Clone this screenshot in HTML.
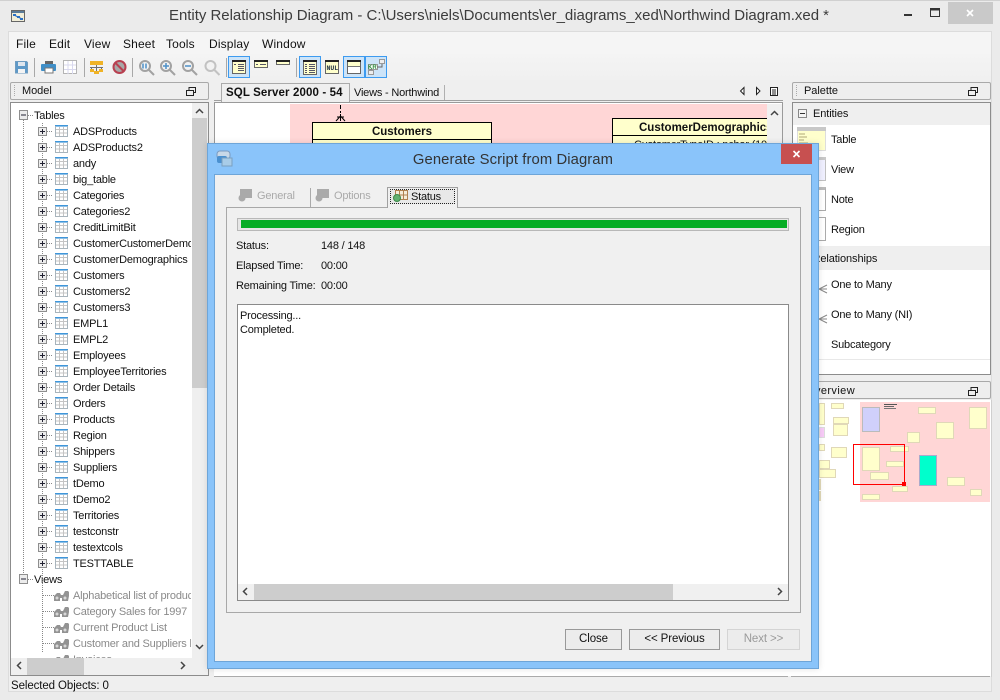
<!DOCTYPE html>
<html><head><meta charset="utf-8"><title>Entity Relationship Diagram</title>
<style>
html,body{margin:0;padding:0}
body{width:1000px;height:700px;position:relative;overflow:hidden;background:#ebebeb;font-family:"Liberation Sans",sans-serif;font-size:11px;letter-spacing:-.2px;color:#111}
div{box-sizing:border-box}
.a,.t{position:absolute}
.t{white-space:nowrap;line-height:16px;margin-top:1px}
.r{height:16px;line-height:16px;white-space:nowrap;padding-left:73px}
.v{color:#8a8a8a}
.h{position:absolute;height:18px;border:1px solid #a9a9a9;border-radius:2px;background:#eee}
.m{font-size:12px;letter-spacing:.15px;top:36px;margin-top:0}
.p{font-size:11px;letter-spacing:-.05px;margin-top:0}
.b{position:absolute;top:629px;height:21px;border:1px solid #999;background:#ececec;text-align:center;line-height:19px;font-size:11.5px;letter-spacing:-.1px}
svg{position:absolute;left:0;top:0}
.ti{color:#3c3c3c;letter-spacing:0}
</style></head><body>
<div class="a" style="left:0;top:0;width:1000px;height:1px;background:#d0d0d0"></div>
<div class="a" style="left:8px;top:31px;width:984px;height:661px;background:#efefef;border:1px solid #dcdcdc"></div>
<div class="a" style="left:9px;top:32px;width:982px;height:22px;background:#f5f5f5"></div>
<div class="a" style="left:9px;top:54px;width:982px;height:26px;background:linear-gradient(#f4f4f4,#f0f0f0)"></div>

<div class="t ti" style="left:169px;top:7px;margin-top:0;line-height:18px;font-size:15px;letter-spacing:-.03px">Entity Relationship Diagram - C:\Users\niels\Documents\er_diagrams_xed\Northwind Diagram.xed *</div>
<div class="a" style="left:948px;top:2px;width:45px;height:22px;background:#c9c9c9"></div>

<div class="t m" style="left:16px">File</div>
<div class="t m" style="left:49px">Edit</div>
<div class="t m" style="left:84px">View</div>
<div class="t m" style="left:123px">Sheet</div>
<div class="t m" style="left:166px">Tools</div>
<div class="t m" style="left:209px">Display</div>
<div class="t m" style="left:262px">Window</div>

<!-- toggled toolbar buttons -->
<div class="a" style="left:228px;top:56px;width:22px;height:22px;background:#cde4f8;border:1px solid #3d9bf0"></div>
<div class="a" style="left:299px;top:56px;width:22px;height:22px;background:#cde4f8;border:1px solid #3d9bf0"></div>
<div class="a" style="left:343px;top:56px;width:22px;height:22px;background:#cde4f8;border:1px solid #3d9bf0"></div>
<div class="a" style="left:365px;top:56px;width:22px;height:22px;background:#cde4f8;border:1px solid #3d9bf0"></div>

<!-- Model panel -->
<div class="h" style="left:10px;top:82px;width:199px"></div>
<div class="t p" style="left:22px;top:83px">Model</div>
<div class="a" style="left:10px;top:102px;width:199px;height:574px;background:#efefef;border:1px solid #8c8c8c"></div>
<div class="a" style="left:11px;top:103px;width:181px;height:555px;background:#fff"></div>
<div class="a" style="left:192px;top:118px;width:15px;height:270px;background:#cdcdcd"></div>
<div class="a" style="left:27px;top:658px;width:57px;height:17px;background:#cdcdcd"></div>
<div class="a" style="left:11px;top:108px;width:180px;height:550px;overflow:hidden">
<div style="position:absolute;left:-11px;top:0;width:200px">
<div class="r" style="padding-left:34px">Tables</div>
<div class="r">ADSProducts</div><div class="r">ADSProducts2</div><div class="r">andy</div><div class="r">big_table</div><div class="r">Categories</div><div class="r">Categories2</div><div class="r">CreditLimitBit</div><div class="r">CustomerCustomerDemo</div><div class="r">CustomerDemographics</div><div class="r">Customers</div><div class="r">Customers2</div><div class="r">Customers3</div><div class="r">EMPL1</div><div class="r">EMPL2</div><div class="r">Employees</div><div class="r">EmployeeTerritories</div><div class="r">Order Details</div><div class="r">Orders</div><div class="r">Products</div><div class="r">Region</div><div class="r">Shippers</div><div class="r">Suppliers</div><div class="r">tDemo</div><div class="r">tDemo2</div><div class="r">Territories</div><div class="r">testconstr</div><div class="r">testextcols</div><div class="r">TESTTABLE</div>
<div class="r" style="padding-left:34px">Views</div>
<div class="r v">Alphabetical list of products</div><div class="r v">Category Sales for 1997</div><div class="r v">Current Product List</div><div class="r v">Customer and Suppliers by City</div><div class="r v">Invoices</div>
</div></div>

<!-- Tabs and diagram -->
<div class="a" style="left:214px;top:100px;width:569px;height:1px;background:#a0a0a0"></div>
<div class="a" style="left:221px;top:83px;width:129px;height:19px;background:#efefef;border:1px solid #aaa;border-bottom:0"></div>
<div class="t" style="left:226px;top:84px;font-weight:bold;font-size:11.5px;letter-spacing:.12px">SQL Server 2000 - 54</div>
<div class="t" style="left:354px;top:84px">Views - Northwind</div>
<div class="a" style="left:444px;top:85px;width:1px;height:15px;background:#b0b0b0"></div>
<div class="a" style="left:214px;top:102px;width:569px;height:574px;background:#fff;border:1px solid #9a9a9a;border-bottom:0"></div>
<div class="a" style="left:290px;top:104px;width:477px;height:558px;background:#ffd6d6"></div>
<div class="a" style="left:767px;top:104px;width:15px;height:558px;background:#f0f0f0"></div>
<div class="a" style="left:312px;top:122px;width:180px;height:30px;background:#ffffcc;border:1px solid #000"></div>
<div class="a" style="left:313px;top:139px;width:178px;height:1px;background:#000"></div>
<div class="t" style="left:312px;top:123px;width:180px;text-align:center;font-weight:bold;font-size:11.5px;letter-spacing:0">Customers</div>
<div class="a" style="left:612px;top:118px;width:155px;height:34px;background:#ffffcc;border:1px solid #000;border-right:0"></div>
<div class="a" style="left:613px;top:135px;width:154px;height:1px;background:#000"></div>
<div class="a" style="left:613px;top:119px;width:154px;height:16px;overflow:hidden"><div class="t" style="left:26px;top:0;font-weight:bold;font-size:11.5px;letter-spacing:0">CustomerDemographics</div></div>
<div class="a" style="left:634px;top:136px;width:133px;height:7px;overflow:hidden"><div class="t" style="left:0;top:0">CustomerTypeID : nchar (10)</div></div>

<!-- Palette -->
<div class="h" style="left:792px;top:82px;width:199px"></div>
<div class="t p" style="left:804px;top:83px">Palette</div>
<div class="a" style="left:792px;top:102px;width:199px;height:273px;background:#fff;border:1px solid #8c8c8c"></div>
<div class="a" style="left:793px;top:103px;width:197px;height:22px;background:#efefef"></div>
<div class="t" style="left:813px;top:105px;letter-spacing:-.1px">Entities</div>
<div class="a" style="left:793px;top:244px;width:197px;height:3px;background:#fff;border-bottom:1px solid #eee"></div>
<div class="a" style="left:793px;top:247px;width:197px;height:23px;background:#efefef"></div>
<div class="t" style="left:812.5px;top:250px;letter-spacing:-.1px">Relationships</div>
<div class="a" style="left:793px;top:359px;width:197px;height:1px;background:#e8e8e8"></div>
<div class="a" style="left:797px;top:127px;width:29px;height:24px;background:#ffffcc;border:1px solid #ddd"></div>
<div class="a" style="left:797px;top:127px;width:29px;height:4px;background:#c8c8c8"></div>
<div class="a" style="left:797px;top:157px;width:29px;height:24px;background:#f0f0ff;border:1px solid #c0c0c0"></div>
<div class="a" style="left:797px;top:157px;width:29px;height:3px;background:#c8c8c8"></div>
<div class="a" style="left:797px;top:187px;width:29px;height:24px;background:#fff;border:1px solid #aaa;border-top:3px solid #bbb"></div>
<div class="a" style="left:797px;top:217px;width:29px;height:24px;background:#fff;border:1px solid #aaa"></div>
<div class="t" style="left:831px;top:131px">Table</div>
<div class="t" style="left:831px;top:161px">View</div>
<div class="t" style="left:831px;top:191px">Note</div>
<div class="t" style="left:831px;top:221px">Region</div>
<div class="t" style="left:831px;top:276px">One to Many</div>
<div class="t" style="left:831px;top:306px">One to Many (NI)</div>
<div class="t" style="left:831px;top:336px">Subcategory</div>

<!-- Overview -->
<div class="h" style="left:792px;top:381px;width:199px"></div>
<div class="t p" style="left:806px;top:383px;letter-spacing:.4px">Overview</div>
<div class="a" style="left:792px;top:400px;width:199px;height:276px;background:#fff"></div>
<div class="a" style="left:991px;top:400px;width:1px;height:277px;background:#cfcfcf"></div>
<div class="a" style="left:214px;top:669px;width:777px;height:7px;background:#fff"></div>
<div class="a" style="left:214px;top:676px;width:574px;height:1px;background:#aaa"></div>
<div class="a" style="left:791px;top:676px;width:199px;height:1px;background:#aaa"></div>
<div class="a" style="left:860px;top:402px;width:130px;height:100px;background:#ffd6d6"></div>
<svg width="1000" height="700" style="z-index:1">
<g fill="#ffffcc" stroke="#e0d8b8">
<rect x="819.5" y="403.5" width="5" height="21"/><rect x="831.5" y="403.5" width="12" height="5"/><rect x="833.5" y="417.5" width="15" height="6"/><rect x="833.5" y="424.5" width="14" height="11"/><rect x="819.5" y="444.5" width="5" height="6"/><rect x="831.5" y="447.5" width="15" height="10"/><rect x="819.5" y="460.5" width="10" height="8"/><rect x="819.5" y="469.5" width="16" height="8"/><rect x="819.5" y="479.5" width="1" height="10"/><rect x="819.5" y="491.5" width="1" height="9"/>
<rect x="918.5" y="407.5" width="17" height="6"/><rect x="969.5" y="407.5" width="17" height="21"/><rect x="936.5" y="422.5" width="17" height="16"/><rect x="907.5" y="432.5" width="12" height="10"/><rect x="862.5" y="447.5" width="17" height="23"/><rect x="890.5" y="446.5" width="18" height="5"/><rect x="886.5" y="461.5" width="17" height="5"/><rect x="870.5" y="472.5" width="18" height="7"/><rect x="947.5" y="477.5" width="17" height="8"/><rect x="892.5" y="486.5" width="15" height="5"/><rect x="970.5" y="489.5" width="11" height="6"/><rect x="862.5" y="494.5" width="17" height="5"/>
</g>
<rect x="819.5" y="427.5" width="5" height="10" fill="#f8ccf8" stroke="#ddd"/>
<rect x="862.5" y="407.5" width="17" height="24" fill="#d0d0fb" stroke="#bbb"/>
<rect x="919.5" y="455.5" width="17" height="30" fill="#00ffcc" stroke="#aac"/>
<rect x="884" y="404" width="13" height="1" fill="#555"/><rect x="884" y="406" width="10" height="1" fill="#666"/><rect x="884" y="408" width="12" height="1" fill="#777"/>
<rect x="853.5" y="444.5" width="51" height="40" fill="none" stroke="#f00"/><rect x="902" y="482" width="4" height="4" fill="#f00"/>
</svg>

<!-- Static icons -->
<svg width="1000" height="700" style="z-index:1">
<defs>
<pattern id="tp" patternUnits="userSpaceOnUse" x="30" y="123" width="44" height="16">
<path d="M12.5 0v16" stroke="#888" stroke-dasharray="1 1"/>
<rect x="8.5" y="4.5" width="8" height="8" fill="#ececec" stroke="#8e8e8e"/><path d="M10 8.5h5M12.5 6v5" stroke="#223" fill="none"/>
<path d="M17 8.5h6" stroke="#888" stroke-dasharray="1 1"/>
<rect x="25.5" y="2.5" width="12" height="11" fill="#fff" stroke="#a8b4bc"/><path d="M25 2.500h13" stroke="#3f96da" stroke-width="1" fill="none"/><path d="M26 3.500h11" stroke="#8cc0e8" fill="none"/><path d="M29.500 4v9M33.500 4v9M26 6.500h11M26 10h11" stroke="#c4c4c4" fill="none"/>
</pattern>
<pattern id="vp" patternUnits="userSpaceOnUse" x="30" y="587" width="44" height="16">
<path d="M13 8.500h11" stroke="#888" stroke-dasharray="1 1"/>
<path d="M24 14v-5l3-3h3l1 2h2l2-4h3l1 1v4l-1 5h-6v-3h-2v3z" fill="#939393"/>
<circle cx="27" cy="11" r="1.500" fill="#d8d8d8"/><circle cx="35" cy="11" r="1.500" fill="#d8d8d8"/>
</pattern>
</defs>
<!-- app icon -->
<rect x="11.500" y="10.500" width="13" height="11" fill="#f2eed8" stroke="#666"/><rect x="12" y="11" width="12" height="2" fill="#5a7a98"/><path d="M14 15l4 2 4 2" stroke="#2a6fc4" fill="none"/><rect x="13" y="14" width="3" height="2" fill="#2a6fc4"/><rect x="17" y="16" width="3" height="2" fill="#2a6fc4"/><rect x="20" y="18" width="3" height="2" fill="#2a6fc4"/>
<!-- tree -->
<path d="M23.500 120V574M42.500 571V652" stroke="#888" stroke-dasharray="1 1" fill="none"/>
<rect x="30" y="123" width="44" height="448" fill="url(#tp)"/>
<rect x="30" y="587" width="44" height="71" fill="url(#vp)"/>
<rect x="19.500" y="110.500" width="8" height="9" fill="#ececec" stroke="#8e8e8e"/><path d="M21 115h5" stroke="#223"/><path d="M28 115.500h5" stroke="#888" stroke-dasharray="1 1"/>
<rect x="19.500" y="574.500" width="8" height="9" fill="#ececec" stroke="#8e8e8e"/><path d="M21 579h5" stroke="#223"/><path d="M28 579.500h5" stroke="#888" stroke-dasharray="1 1"/>
<!-- panel grips and restore icons -->
<path d="M14.500 85V97M796.500 85V97" stroke="#aaa" stroke-dasharray="1 1"/>
<g fill="none" stroke="#222"><rect x="186.500" y="90.500" width="7" height="5" fill="#eee"/><path d="M189 90v-2.500h6.500v5H194"/>
<rect x="968.500" y="90.500" width="7" height="5"/><path d="M971 90v-2.500h6.500v5H976"/>
<rect x="968.500" y="390.500" width="7" height="5"/><path d="M971 390v-2.500h6.500v5H976"/></g>
<!-- window controls -->
<rect x="904" y="14" width="8" height="2" fill="#333"/><rect x="930.500" y="8.500" width="9" height="8" fill="none" stroke="#333"/><path d="M930 9.500h10" stroke="#333" stroke-width="2"/>
<path d="M967 10l6 6M973 10l-6 6" stroke="#fff" stroke-width="1.600"/>
<!-- scroll arrows -->
<g fill="none" stroke="#444" stroke-width="1.500"><path d="M196 113l3.500-3.500 3.500 3.500M196 645l3.500 3.500 3.500-3.500M21 662l-3.500 3.500 3.500 3.500M181 662l3.500 3.500-3.500 3.500M771 115l3.500-3.500 3.500 3.500"/></g>
<!-- tab nav -->
<path d="M744 87.500v7l-3.500-3.500zM756.500 87.500v7l3.500-3.500z" fill="#fff" stroke="#222"/>
<rect x="770.500" y="87.500" width="7" height="8" fill="#fff" stroke="#222"/><path d="M772 90h4M772 92h4M772 94h4" stroke="#222"/>
<!-- diagram -->
<path d="M340.500 105v8" stroke="#000" stroke-dasharray="4 2"/><path d="M336 121l4.500-5 4.500 5M340.500 114v7M337 117h7" fill="none" stroke="#000"/>
<!-- palette -->
<rect x="798.500" y="109.500" width="8" height="8" fill="#f4f4f4" stroke="#888"/><path d="M800 113.500h5" stroke="#333"/>
<path d="M827 285l-8 4 8 4M819 289h8M827 315l-8 4 8 4M819 319h8" fill="none" stroke="#888"/>
<path d="M799 134h6M799 137h8M799 140h5M799 143h9M799 146h7" stroke="#b0a878"/>
<!-- toolbar: save -->
<path d="M15.500 61.500h11l1 1v10.500h-12z" fill="#5e99c8" stroke="#6f9cc0"/><rect x="18" y="62" width="7" height="4" fill="#dfe6ee"/><rect x="18" y="69" width="7" height="4" fill="#f4f4f4"/>
<path d="M34.500 58v19M84.500 58v19M132.500 58v19M226.500 58v19M296.500 58v19" stroke="#a8a8a8"/>
<!-- print -->
<rect x="45" y="61" width="8" height="3" fill="#666"/><rect x="41" y="64" width="15" height="7" rx="1" fill="#3f8fc8"/><rect x="45" y="68" width="8" height="5" fill="#fff" stroke="#777"/>
<!-- grid -->
<rect x="63.500" y="60.500" width="13" height="13" fill="#fff" stroke="#b4b4b4"/><path d="M68 61v13M72.500 61v13M64 65h12M64 69.500h12" stroke="#d8d8ee"/>
<!-- orange tree -->
<rect x="90" y="61" width="13" height="4" fill="#f0b326"/><path d="M90 67.500h13M96.500 65v7M91.500 67v3M101.500 67v3" stroke="#707070" fill="none"/><rect x="90" y="69" width="4" height="3" fill="#f0b326"/><rect x="99" y="69" width="4" height="3" fill="#f0b326"/><rect x="94" y="71" width="5" height="3" fill="#f0b326"/>
<!-- no sign -->
<circle cx="119.500" cy="67" r="6" fill="#a8a8a8" stroke="#b84050" stroke-width="2"/><path d="M115.500 63l8 8" stroke="#b84050" stroke-width="2"/>
<!-- magnifiers -->
<g fill="none" stroke="#a2a2a2" stroke-width="2"><circle cx="145" cy="66" r="5"/><path d="M149 70l5 5"/><circle cx="166" cy="66" r="5"/><path d="M170 70l5 5"/><circle cx="188" cy="66" r="5"/><path d="M192 70l5 5"/><circle cx="210.500" cy="66" r="5" stroke="#c2c2c2"/><path d="M214.500 70l5 5" stroke="#c2c2c2"/></g>
<path d="M143 63.500v5M146 63.500v5" stroke="#4d90c8" stroke-width="1.500"/><path d="M163 66h6M166 63v6M185 66h6" stroke="#4d90c8" stroke-width="1.500"/>
<!-- display icons -->
<g stroke="#666"><rect x="232.500" y="60.500" width="13" height="13" fill="#ffffcc"/><rect x="254.500" y="60.500" width="13" height="7" fill="#ffffcc"/><rect x="276.500" y="60.500" width="13" height="4" fill="#ffffcc"/><rect x="303.500" y="60.500" width="13" height="14" fill="#ffffcc"/><rect x="325.500" y="60.500" width="13" height="13" fill="#ffffcc"/><rect x="347.500" y="60.500" width="13" height="13" fill="#fff"/></g>
<g fill="#222"><rect x="232" y="60" width="14" height="2"/><rect x="254" y="60" width="14" height="2"/><rect x="276" y="60" width="14" height="2"/><rect x="303" y="60" width="14" height="2"/><rect x="325" y="60" width="14" height="2"/><rect x="347" y="60" width="14" height="2"/></g>
<path d="M234 64.500h2M238 64.500h6M238 66.500h6M238 68.500h6M238 70.500h6M256 64.500h2M260 64.500h6M305 64.500h2M309 64.500h6M305 66.500h2M309 66.500h6M305 68.500h2M309 68.500h6M305 70.500h2M309 70.500h6M305 72.500h2M309 72.500h6" stroke="#556"/>
<rect x="348" y="62" width="12" height="4" fill="#ffffcc"/><path d="M348 66.500h12" stroke="#777"/>
<text x="326.500" y="70" font-family="Liberation Mono" font-weight="bold" font-size="6.500" fill="#234" letter-spacing="0">NUL</text>
<rect x="368.500" y="64.500" width="9" height="5" fill="#fff" stroke="#999"/><rect x="379.500" y="59.500" width="5" height="4" fill="#eee" stroke="#999"/><rect x="368.500" y="70.500" width="5" height="4" fill="#eee" stroke="#999"/><path d="M377 67h5v-3M371 70v-1" stroke="#666" fill="none"/>
<text x="368" y="69" font-family="Liberation Sans" font-weight="bold" font-size="6" fill="#2a8a3a" letter-spacing="0">KR</text>
</svg>

<!-- Status bar -->
<div class="t" style="left:11px;top:677px;font-size:11.5px;letter-spacing:-.1px">Selected Objects: 0</div>

<!-- Dialog -->
<div class="a" style="left:207px;top:143px;width:612px;height:526px;background:#8ac4fa;border:1px solid #6ea5d8;box-shadow:0 0 6px rgba(0,0,0,.12);z-index:2"></div>
<div class="a" style="left:214px;top:174px;width:598px;height:488px;background:#f0f0f0;border:1px solid #6ea5d8;z-index:2"></div>
<div class="a" style="left:781px;top:144px;width:31px;height:20px;background:#c75050;z-index:2"></div>
<div class="t ti" style="left:208px;top:150px;width:610px;text-align:center;line-height:18px;z-index:2;color:#333;font-size:14.8px;letter-spacing:.1px">Generate Script from Diagram</div>

<div class="a" style="left:226px;top:207px;width:575px;height:406px;border:1px solid #a8a8a8;background:#f0f0f0;z-index:2"></div>
<div class="a" style="left:387px;top:187px;width:71px;height:21px;background:#f0f0f0;border:1px solid #a0a0a0;border-bottom:0;z-index:2"></div>
<div class="a" style="left:390px;top:189px;width:65px;height:15px;border:1px dotted #222;background:#e8e8e8;z-index:2"></div>
<div class="t" style="left:257px;top:187px;z-index:2;color:#aaa">General</div>
<div class="t" style="left:334px;top:187px;z-index:2;color:#aaa">Options</div>
<div class="t" style="left:411px;top:188px;z-index:2">Status</div>

<div class="a" style="left:237px;top:218px;width:552px;height:13px;background:#e6e6e6;border:1px solid #b8b8b8;z-index:2"></div>
<div class="a" style="left:241px;top:220px;width:546px;height:8px;background:#06ad25;z-index:2"></div>

<div class="t" style="left:236px;top:237px;z-index:2">Status:</div>
<div class="t" style="left:321px;top:237px;z-index:2">148 / 148</div>
<div class="t" style="left:236px;top:257px;z-index:2">Elapsed Time:</div>
<div class="t" style="left:321px;top:257px;z-index:2">00:00</div>
<div class="t" style="left:236px;top:277px;z-index:2">Remaining Time:</div>
<div class="t" style="left:321px;top:277px;z-index:2">00:00</div>

<div class="a" style="left:237px;top:304px;width:552px;height:297px;background:#fff;border:1px solid #8a8a8a;z-index:2"></div>
<div class="a" style="left:238px;top:584px;width:550px;height:16px;background:#f0f0f0;z-index:2"></div>
<div class="a" style="left:254px;top:584px;width:419px;height:16px;background:#cdcdcd;z-index:2"></div>
<div class="t" style="left:240px;top:307px;z-index:2">Processing...</div>
<div class="t" style="left:240px;top:321px;z-index:2">Completed.</div>

<div class="b" style="left:565px;width:57px;z-index:2">Close</div>
<div class="b" style="left:629px;width:91px;z-index:2">&lt;&lt; Previous</div>
<div class="b" style="left:727px;width:73px;z-index:2;color:#9a9a9a;border-color:#d4d4d4">Next &gt;&gt;</div>

<svg width="1000" height="700" style="z-index:3">
<rect x="217" y="151" width="13" height="8" rx="3" fill="#c8d8e8" stroke="#7a9ac0"/><rect x="217" y="156" width="10" height="7" rx="2" fill="#4a90d0"/><rect x="222" y="158" width="10" height="8" fill="#a8cce8" stroke="#7aa0c0"/>
<path d="M793.500 151l6 6M799.500 151l-6 6" stroke="#fff" stroke-width="1.600"/>
<g fill="#aaa"><rect x="240" y="189" width="12" height="9"/><circle cx="242" cy="198" r="3.500"/><rect x="317" y="189" width="12" height="9"/><circle cx="319" cy="198" r="3.500"/></g>
<path d="M310.500 188v19" stroke="#aaa"/>
<rect x="395.500" y="190.500" width="12" height="9" fill="#f6ecd8" stroke="#b08050"/><path d="M399.500 190v10M403.500 190v10M396 195h11" stroke="#b08050"/><circle cx="397" cy="198" r="3.500" fill="#62b070" stroke="#3f8a4c"/>
<g fill="none" stroke="#444" stroke-width="1.500"><path d="M247 588l-3.500 3.500 3.500 3.500M778 588l3.500 3.500-3.500 3.500"/></g>
</svg>
</body></html>
